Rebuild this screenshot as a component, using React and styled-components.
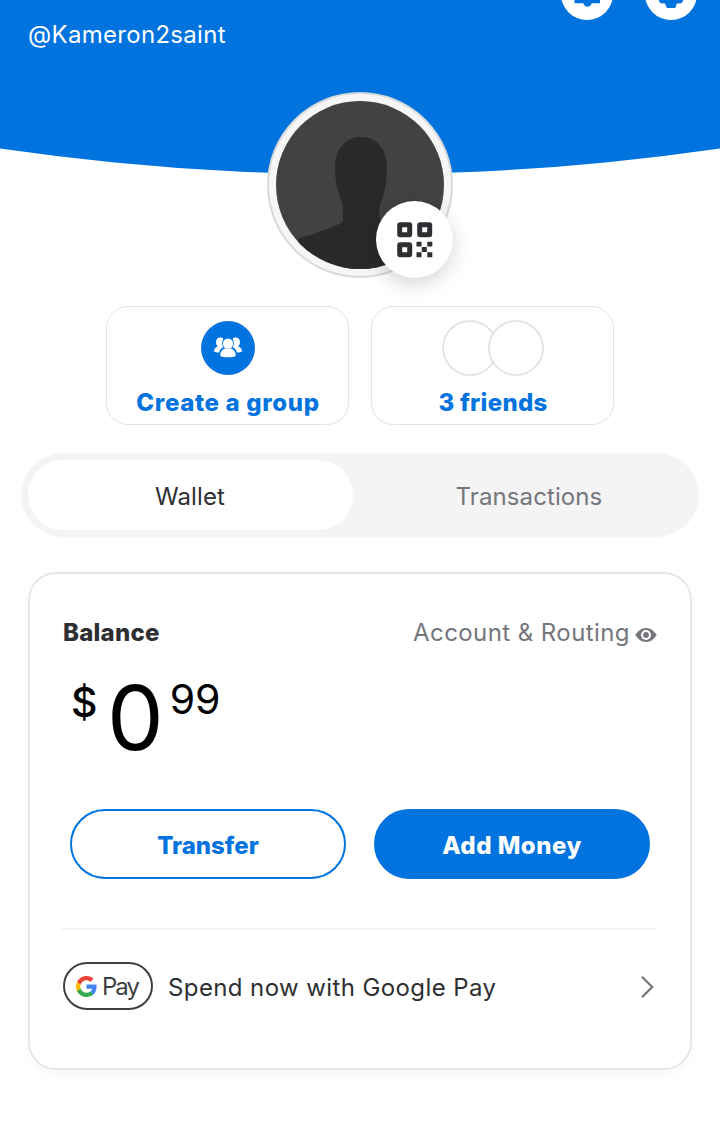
import React from "react";
import styled, { createGlobalStyle } from "styled-components";

const GlobalStyle = createGlobalStyle`
  * {
    box-sizing: border-box;
  }

  body {
    margin: 0;
    background: #fff;
    font-family: "Inter", "Liberation Sans", sans-serif;
    color: #2e2f32;
    overflow: hidden;
  }

  button {
    font-family: inherit;
    padding: 0;
    cursor: pointer;
  }

  svg {
    display: block;
  }
`;

const Page = styled.main`
  width: 720px;
  height: 1126px;
  overflow: hidden;
`;

const Header = styled.header`
  height: 174px;
  padding: 0 23px 0 28px;
  display: flex;
  align-items: flex-start;
  justify-content: space-between;
  background: #0073df;
  clip-path: circle(2505px at 50% -2330.5px);
`;

const Handle = styled.div`
  margin-top: 20px;
  font-size: 24px;
  line-height: 30px;
  letter-spacing: 0.3px;
  color: #fff;
`;

const HeaderActions = styled.div`
  display: flex;
  gap: 32px;
  margin-top: -32px;
`;

const RoundButton = styled.button`
  width: 52px;
  height: 52px;
  border: 0;
  border-radius: 50%;
  background: #fff;
  color: #0073df;
  display: flex;
  align-items: center;
  justify-content: center;
`;

const Avatar = styled.div`
  position: relative;
  width: 186px;
  height: 186px;
  margin: -82px auto 0;
  padding: 7px;
  border: 2px solid #d9d9db;
  border-radius: 50%;
  background: #f6f6f6;

  > svg {
    border-radius: 50%;
  }
`;

const QrBadge = styled.button`
  position: absolute;
  right: -2px;
  bottom: -2px;
  width: 77px;
  height: 77px;
  border: 0;
  border-radius: 50%;
  background: #fff;
  box-shadow: 0 6px 20px rgba(0, 0, 0, 0.17);
  display: flex;
  align-items: center;
  justify-content: center;
`;

const Tiles = styled.section`
  display: flex;
  justify-content: center;
  gap: 22px;
  margin-top: 28px;
`;

const Tile = styled.div`
  width: 243px;
  height: 119px;
  padding-top: 13px;
  border: 1px solid #e3e4e5;
  border-radius: 22px;
  display: flex;
  flex-direction: column;
  align-items: center;
`;

const TileIcons = styled.div`
  height: 56px;
  display: flex;
  align-items: center;
`;

const GroupIcon = styled.div`
  width: 54px;
  height: 54px;
  border-radius: 50%;
  background: #0073df;
  display: flex;
  align-items: center;
  justify-content: center;
`;

const Friend = styled.div`
  width: 56px;
  height: 56px;
  border: 2px solid #e3e4e5;
  border-radius: 50%;
  background: #fff;

  & + & {
    margin-left: -10px;
  }
`;

const TileLabel = styled.span`
  margin-top: 12px;
  padding-left: 1px;
  font-size: 24px;
  font-weight: 800;
  line-height: 30px;
  letter-spacing: ${(props) => props.$spacing}px;
  white-space: nowrap;
  color: #0073df;
`;

const Tabs = styled.nav`
  height: 84px;
  margin: 28px 21px 0;
  padding: 7px;
  border-radius: 42px;
  background: #f4f4f4;
  display: grid;
  grid-template-columns: 1fr 1fr;
  gap: 14px;
`;

const Tab = styled.button`
  border: 0;
  border-radius: 35px;
  background: ${(props) => (props.$active ? "#fff" : "transparent")};
  color: ${(props) => (props.$active ? "#2e2f32" : "#74767c")};
  font-size: 24px;
  line-height: 30px;
  padding: 3px 1px 0 0;
  letter-spacing: 0.1px;
`;

const Card = styled.section`
  height: 498px;
  margin: 35px 28px 0;
  padding: 0 33px;
  border: 2px solid #e6e7e8;
  border-radius: 28px;
  box-shadow: 0 6px 14px rgba(0, 0, 0, 0.03);
`;

const CardHead = styled.div`
  display: flex;
  align-items: center;
  justify-content: space-between;
  padding-top: 44px;
  line-height: 30px;
`;

const CardTitle = styled.h2`
  margin: 0;
  font-size: 24px;
  font-weight: 800;
  letter-spacing: 0.25px;
`;

const AccountLink = styled.div`
  display: flex;
  align-items: center;
  gap: 5px;
  font-size: 24px;
  letter-spacing: 0.42px;
  color: #74767c;

  svg {
    margin-top: 3px;
  }
`;

const Amount = styled.div`
  height: 90px;
  margin-top: 25px;
  padding-left: 8px;
  display: flex;
  align-items: flex-start;
  line-height: 1;
  color: #000;
`;

const Currency = styled.span`
  width: 26px;
  margin-top: 9px;
  font-size: 41px;
  font-weight: 500;
`;

const Dollars = styled.span`
  margin: 0 5px 0 10px;
  font-size: 90px;
  letter-spacing: 1px;
`;

const Cents = styled.span`
  margin-top: 6px;
  font-size: 41px;
  letter-spacing: -0.3px;
`;

const Actions = styled.div`
  display: grid;
  grid-template-columns: 1fr 1fr;
  gap: 28px;
  margin-top: 46px;
  padding: 0 7px;
`;

const ActionButton = styled.button`
  height: 70px;
  padding-top: 2px;
  border: 2px solid #0073df;
  border-radius: 35px;
  background: ${(props) => (props.$primary ? "#0073df" : "#fff")};
  color: ${(props) => (props.$primary ? "#fff" : "#0073df")};
  font-size: 24px;
  font-weight: 800;
  letter-spacing: ${(props) => (props.$primary ? "0.5px" : "0")};
`;

const Divider = styled.hr`
  height: 2px;
  margin: 49px 0 32px -1px;
  border: 0;
  background: #f2f2f3;
`;

const PayRow = styled.div`
  display: flex;
  align-items: center;
  font-size: 24px;

  > svg {
    margin: 1px 3px 0 0;
  }
`;

const PayLogo = styled.div`
  width: 90px;
  height: 48px;
  margin-right: 15px;
  padding-left: 11px;
  border: 2px solid #3c4043;
  border-radius: 24px;
  display: flex;
  align-items: center;
  color: #3c4043;

  span {
    margin-left: 5px;
    letter-spacing: -2px;
  }
`;

const PayText = styled.span`
  flex: 1;
  padding-top: 2px;
  letter-spacing: 0.4px;
`;

function BellIcon() {
  return (
    <svg width="30" height="30" viewBox="0 0 30 30" fill="currentColor">
      <path d="M15 1a9 9 0 0 0-9 9v8l-3.500 3.200V24.300H11.200c1 2.400 2.500 3.500 4.300 3.500s3.300-1.100 4.300-3.500H28V21.200L24 18v-8a9 9 0 0 0-9-9z" />
    </svg>
  );
}

function GearIcon() {
  return (
    <svg width="30" height="30" viewBox="0 0 30 30" fill="currentColor">
      <path d="M11.500.5h7l1 3.500 4-1 4.500 6-3 3v6l2.500 3-2 3.300-4.500.2-1.800 4.500h-8.400L9 24.500l-4.500-.2-2-3.300L5 18v-6L2 9l4.500-6 4 1z" />
      <circle cx="15" cy="14" r="4.500" fill="#fff" />
    </svg>
  );
}

function Silhouette() {
  return (
    <svg width="168" height="168" viewBox="0 0 168 168">
      <rect width="168" height="168" fill="#424242" />
      <path
        fill="#292929"
        d="M85 36c-16 0-26 13-26 30 0 14 2 23 7 36 1 4 1 9 1 18-3 4-20 10-45 18v30h146v-30c-34-9-62-14-64-20-1-6-1-10 0-14 5-12 7-24 7-38 0-17-10-30-26-30z"
      />
    </svg>
  );
}

function QrIcon() {
  return (
    <svg width="36" height="36" viewBox="0 0 36 36" fill="#2e2f32">
      <path
        fillRule="evenodd"
        d="M3.200.2h9a3 3 0 0 1 3 3v9a3 3 0 0 1-3 3h-9a3 3 0 0 1-3-3v-9a3 3 0 0 1 3-3zM5.200 5.200v5h5v-5zM23.200.2h9a3 3 0 0 1 3 3v9a3 3 0 0 1-3 3h-9a3 3 0 0 1-3-3v-9a3 3 0 0 1 3-3zM25.200 5.200v5h5v-5zM3.200 20.200h9a3 3 0 0 1 3 3v9a3 3 0 0 1-3 3h-9a3 3 0 0 1-3-3v-9a3 3 0 0 1 3-3zM5.200 25.200v5h5v-5z"
      />
      <path d="M19.500 19.800h5v4.800h-5zM30.300 19.800h5v4.800h-5zM24.800 25h5v5h-5zM19.500 30.300h5v5h-5zM30.300 30.300h5v5h-5z" />
    </svg>
  );
}

function GroupGlyph() {
  return (
    <svg width="28" height="22" viewBox="0 0 28 22" fill="#fff">
      <path d="M0 14.500c0-3 2-4.500 4-5C2.800 8.500 2 7 2 5.200 2 2.400 3.800.5 6.200.5c1.300 0 2.400.5 3.200 1.400C7.600 4.700 7.800 8 9.200 10.200 7 11.200 5.500 13 5.200 15.600 2.800 15.600.8 15.300 0 14.500z" />
      <path d="M28 14.500c0-3-2-4.500-4-5 1.200-1 2-2.500 2-4.300C26 2.400 24.200.5 21.800.5c-1.300 0-2.400.5-3.200 1.400 1.800 2.800 1.600 6.100.2 8.300 2.200 1 3.700 2.800 4 5.400 2.400 0 4.400-.3 5.200-1.100z" />
      <circle cx="14" cy="6.700" r="5.200" />
      <path d="M6.200 18.800c0-4.600 2.600-6.900 5-7.400 1.700 1 3.900 1 5.600 0 2.400.5 5 2.800 5 7.400-2 2-13.600 2-15.600 0z" />
    </svg>
  );
}

function EyeIcon() {
  return (
    <svg width="22" height="14" viewBox="0 0 22 14" fill="#74767c">
      <path d="M11 0C6.500 0 3 2.800.3 7 3 11.200 6.500 14 11 14s8-2.800 10.700-7C19 2.800 15.500 0 11 0z" />
      <circle cx="11" cy="7" r="5" fill="#fff" />
      <circle cx="11" cy="7" r="2.900" />
    </svg>
  );
}

function GoogleG() {
  return (
    <svg width="21" height="21" viewBox="1 1 22 22">
      <path fill="#4285f4" d="M22.560 12.250c0-.78-.07-1.530-.2-2.250H12v4.260h5.920c-.26 1.370-1.040 2.530-2.210 3.310v2.770h3.570c2.080-1.920 3.280-4.740 3.280-8.090z" />
      <path fill="#34a853" d="M12 23c2.970 0 5.460-.98 7.280-2.660l-3.570-2.770c-.98.66-2.230 1.060-3.710 1.060-2.860 0-5.290-1.930-6.160-4.530H2.180v2.840C3.990 20.530 7.700 23 12 23z" />
      <path fill="#fbbc05" d="M5.840 14.090c-.22-.66-.35-1.360-.35-2.090s.13-1.430.35-2.090V7.070H2.180C1.430 8.550 1 10.220 1 12s.43 3.450 1.180 4.930z" />
      <path fill="#ea4335" d="M12 5.380c1.620 0 3.060.56 4.210 1.640l3.150-3.150C17.450 2.090 14.970 1 12 1 7.700 1 3.990 3.470 2.180 7.070l3.660 2.840c.87-2.600 3.300-4.530 6.160-4.530z" />
    </svg>
  );
}

function Chevron() {
  return (
    <svg width="14" height="24" viewBox="0 0 14 24" fill="none" stroke="#74767c" strokeWidth="2.300">
      <path d="M2 1.800L12.200 12 2 22.200" />
    </svg>
  );
}

function App() {
  return (
    <Page>
      <GlobalStyle />
      <Header>
        <Handle>@Kameron2saint</Handle>
        <HeaderActions>
          <RoundButton>
            <BellIcon />
          </RoundButton>
          <RoundButton>
            <GearIcon />
          </RoundButton>
        </HeaderActions>
      </Header>
      <Avatar>
        <Silhouette />
        <QrBadge>
          <QrIcon />
        </QrBadge>
      </Avatar>
      <Tiles>
        <Tile>
          <TileIcons>
            <GroupIcon>
              <GroupGlyph />
            </GroupIcon>
          </TileIcons>
          <TileLabel $spacing={0.65}>Create a group</TileLabel>
        </Tile>
        <Tile>
          <TileIcons>
            <Friend />
            <Friend />
          </TileIcons>
          <TileLabel $spacing={0.3}>3 friends</TileLabel>
        </Tile>
      </Tiles>
      <Tabs>
        <Tab $active>Wallet</Tab>
        <Tab>Transactions</Tab>
      </Tabs>
      <Card>
        <CardHead>
          <CardTitle>Balance</CardTitle>
          <AccountLink>
            <span>Account &amp; Routing</span>
            <EyeIcon />
          </AccountLink>
        </CardHead>
        <Amount>
          <Currency>$</Currency>
          <Dollars>0</Dollars>
          <Cents>99</Cents>
        </Amount>
        <Actions>
          <ActionButton>Transfer</ActionButton>
          <ActionButton $primary>Add Money</ActionButton>
        </Actions>
        <Divider />
        <PayRow>
          <PayLogo>
            <GoogleG />
            <span>Pay</span>
          </PayLogo>
          <PayText>Spend now with Google Pay</PayText>
          <Chevron />
        </PayRow>
      </Card>
    </Page>
  );
}

export default App;
